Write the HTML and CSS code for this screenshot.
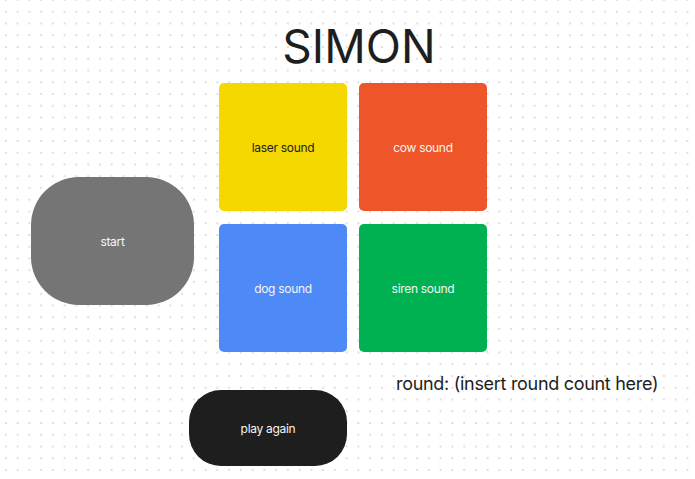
FILE: index.html
```html
<!DOCTYPE html>
<html lang="en">
<head>
  <meta charset="UTF-8">
  <title>Simon</title>
  <meta name="viewport" content="width=device-width, initial-scale=1.0">
  <link rel="stylesheet" href="styles.css">
</head>
<body>
  <main class="stage">
    <h1 class="title">SIMON</h1>
    <div class="play-row">
      <button class="start-btn">start</button>
      <div class="pads">
        <button class="pad pad-yellow">laser sound</button>
        <button class="pad pad-orange">cow sound</button>
        <button class="pad pad-blue">dog sound</button>
        <button class="pad pad-green">siren sound</button>
      </div>
    </div>
    <div class="footer-row">
      <button class="again-btn">play again</button>
      <p class="round">round: (insert round count here)</p>
    </div>
  </main>
</body>
</html>
```

FILE: styles.css
```css
html, body { margin: 0; padding: 0; }
body { font-family: 'Inter', 'Noto Sans', Arial, sans-serif; color: #1e1e1e; background-color: #fff; background-image: radial-gradient(circle, #dedede 0.7px, transparent 1.1px); background-size: 11.75px 11.75px; background-position: 0 -5.9px; min-height: 479px; }
button { font-family: inherit; border: none; cursor: pointer; padding: 0; letter-spacing: -0.3px; }

.stage { padding-top: 23px; }
.title { margin: 0 0 14px 219px; width: 269px; padding-left: 11px; box-sizing: border-box; text-align: center; font-size: 46px; line-height: 46px; font-weight: 400; color: #1e1e1e; }

.play-row { display: flex; align-items: flex-start; gap: 25px; padding-left: 31px; }
.start-btn { width: 163px; height: 128px; margin-top: 94px; border-radius: 48px; background: #757575; color: #f5f5f5; font-size: 12px; }

.pads { display: grid; grid-template-columns: 128px 128px; grid-auto-rows: 128px; column-gap: 12px; row-gap: 13px; }
.pad { border-radius: 5px; font-size: 12px; color: #f5f5f5; }
.pad-yellow { background: #f5d800; color: #1e1e1e; }
.pad-orange { background: #ee5528; }
.pad-blue { background: #4d8af8; }
.pad-green { background: #00b152; }

.footer-row { display: flex; align-items: flex-start; padding-left: 189px; margin-top: 21px; }
.again-btn { width: 158px; height: 76px; margin-top: 17px; border-radius: 32px; background: #1e1e1e; color: #f5f5f5; font-size: 12px; }
.round { margin: 0 0 0 49px; font-size: 18px; line-height: 22px; letter-spacing: -0.3px; color: #1e1e1e; }
```
